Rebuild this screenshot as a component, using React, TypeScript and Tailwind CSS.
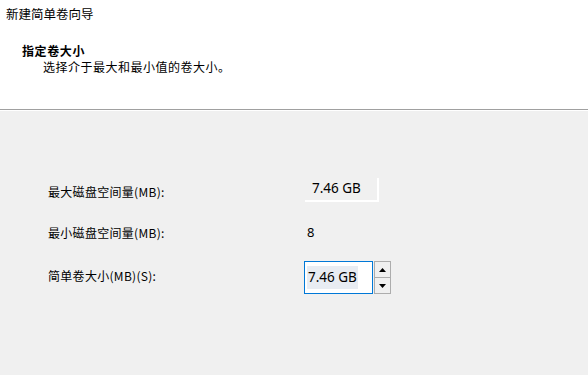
import React from "react";

const cjk = { fontFamily: '"Noto Sans CJK SC", "Noto Sans", sans-serif' };
const lat = { fontFamily: '"Noto Sans", "Noto Sans CJK SC", sans-serif' };

export default function App() {
  return (
    <div className="w-[588px] h-[375px] bg-[#f0f0f0] flex flex-col overflow-hidden text-black" style={cjk}>
      <div className="h-[109px] bg-white flex flex-col">
        <div className="pl-[6px] pt-[5px] text-[12.5px] leading-[17px]">新建简单卷向导</div>
        <div className="pl-[22px] pt-[21px] text-[12px] leading-[16px] font-bold tracking-[0.6px]">指定卷大小</div>
        <div className="pl-[43px] pt-[0px] text-[12px] leading-[16px] tracking-[0.5px]">选择介于最大和最小值的卷大小。</div>
      </div>
      <div className="h-px bg-[#a0a0a0]" />
      <div className="h-px bg-white" />
      <div className="flex flex-col pl-[48px] pt-[67px]">
        <div className="flex items-center h-[23px]">
          <div className="w-[257px] text-[12px] leading-[16px] pt-[4px] tracking-[0.3px]">最大磁盘空间量(MB):</div>
          <div className="w-[74px] h-[24px] border-r-2 border-b-2 border-white flex items-center pl-[7px] text-[13.5px]" style={lat}>
            7.46 GB
          </div>
        </div>
        <div className="flex items-center h-[20px] mt-[22px]">
          <div className="w-[259px] text-[12px] leading-[16px] tracking-[0.3px]">最小磁盘空间量(MB):</div>
          <div className="text-[13px]" style={lat}>8</div>
        </div>
        <div className="flex items-center mt-[18px]">
          <div className="w-[256px] text-[12px] leading-[16px] pb-[3px] tracking-[0.3px]">简单卷大小(MB)(S):</div>
          <div className="flex">
            <div className="w-[69px] h-[33px] border border-[#0078d7] bg-white flex items-center pl-[2px]">
              <span className="bg-[#e8ecf2] px-[1px] h-[23px] flex items-center text-[13.5px]" style={lat}>7.46 GB</span>
            </div>
            <div className="w-[17px] h-[33px] border border-[#adadad] flex flex-col ml-px bg-[#f0f0f0]">
              <div className="flex-1 border-b border-[#adadad] flex items-center justify-center">
                <svg width="7" height="4" viewBox="0 0 7 4"><path d="M3.5 0 L7 4 L0 4 Z" fill="#000" /></svg>
              </div>
              <div className="flex-1 flex items-center justify-center">
                <svg width="7" height="4" viewBox="0 0 7 4"><path d="M0 0 L7 0 L3.5 4 Z" fill="#000" /></svg>
              </div>
            </div>
          </div>
        </div>
      </div>
    </div>
  );
}
